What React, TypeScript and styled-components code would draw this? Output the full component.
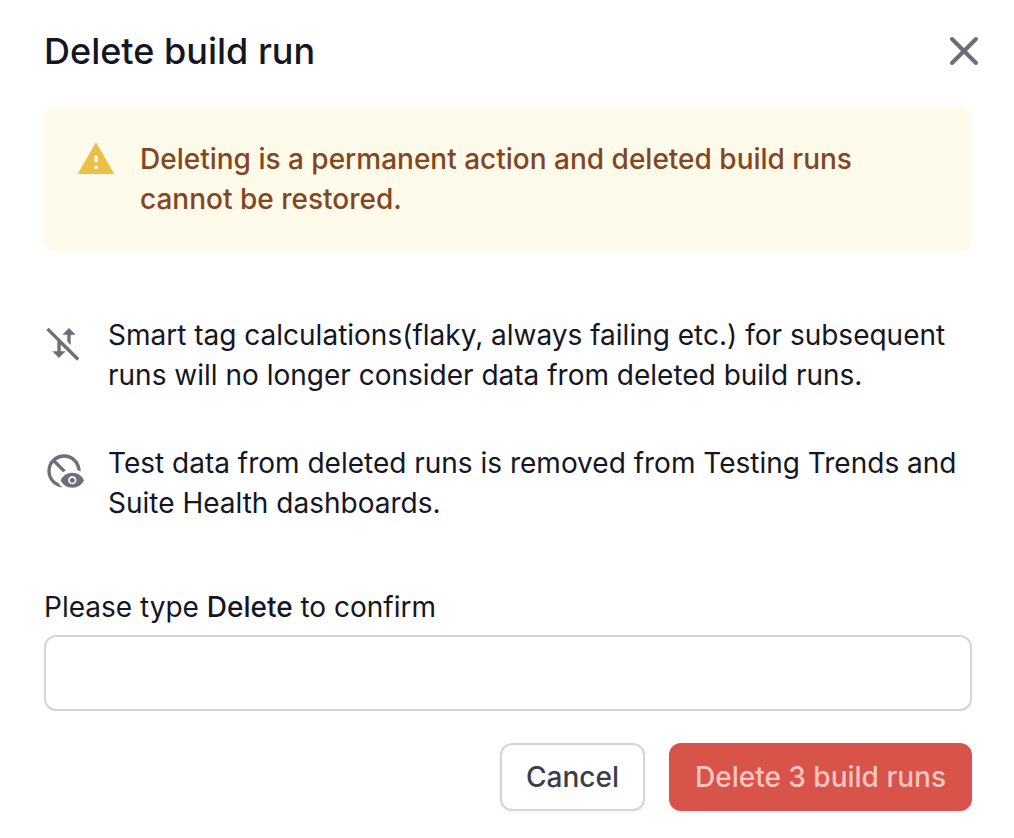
import React, { useState } from "react";
import styled, { createGlobalStyle } from "styled-components";
import { X } from "lucide-react";
import { MdDisabledVisible, MdMobiledataOff, MdWarning } from "react-icons/md";

const GlobalStyle = createGlobalStyle`
  *, *::before, *::after { box-sizing: border-box; }
  body {
    margin: 0;
    background: #ffffff;
    color: #141624;
    font-family: Inter, "Liberation Sans", sans-serif;
    font-size: 28px;
    line-height: 40px;
  }
`;

const Dialog = styled.section`
  padding: 27px 42px 27px 44px;
`;

const Header = styled.header`
  display: flex;
  align-items: center;
  justify-content: space-between;
  margin-bottom: 32px;
`;

const Title = styled.h2`
  margin: 0;
  font-size: 36px;
  line-height: 48px;
  font-weight: 500;
`;

const CloseButton = styled.button`
  display: flex;
  margin: 0 -16px 0 0;
  padding: 0;
  border: 0;
  background: none;
  color: #6c6f7a;
  cursor: pointer;
`;

const Alert = styled.div`
  display: flex;
  gap: 24px;
  padding: 32px;
  border-radius: 12px;
  background: #fefbeb;
  color: #854520;
  font-weight: 500;
`;

const IconSlot = styled.span<{ $color: string }>`
  display: flex;
  flex: none;
  color: ${(p) => p.$color};
`;

const Text = styled.p`
  margin: 0;
`;

const Effects = styled.ul`
  display: flex;
  flex-direction: column;
  gap: 48px;
  margin: 64px 0;
  padding: 0;
  list-style: none;
`;

const Effect = styled.li`
  display: flex;
  gap: 24px;

  ${IconSlot} {
    padding-top: 8px;
  }
`;

const Field = styled.div`
  display: flex;
  flex-direction: column;
  gap: 8px;
`;

const Label = styled.label`
  strong {
    font-weight: 500;
  }
`;

const Input = styled.input`
  width: 100%;
  height: 76px;
  padding: 0 24px;
  border: 2px solid #d4d5d7;
  border-radius: 12px;
  background: #ffffff;
  color: inherit;
  font: inherit;
`;

const Actions = styled.footer`
  display: flex;
  justify-content: flex-end;
  gap: 24px;
  margin-top: 32px;
`;

const Button = styled.button<{ $danger?: boolean }>`
  padding: 12px 24px;
  border: 2px solid ${(p) => (p.$danger ? "#d8534a" : "#d4d5d7")};
  border-radius: 12px;
  background: ${(p) => (p.$danger ? "#d8534a" : "#ffffff")};
  color: ${(p) => (p.$danger ? "#fcc5c0" : "#3a3d4a")};
  box-shadow: 0 2px 4px rgba(0, 0, 0, 0.05);
  font: inherit;
  font-weight: 500;
  cursor: pointer;
`;

export default function App() {
  const [value, setValue] = useState("");

  return (
    <Dialog role="dialog" aria-labelledby="dialog-title">
      <GlobalStyle />
      <Header>
        <Title id="dialog-title">Delete build run</Title>
        <CloseButton type="button" aria-label="Close">
          <X size={48} strokeWidth={2} />
        </CloseButton>
      </Header>

      <Alert role="alert">
        <IconSlot $color="#ecc048">
          <MdWarning size={40} />
        </IconSlot>
        <Text>Deleting is a permanent action and deleted build runs cannot be restored.</Text>
      </Alert>

      <Effects>
        <Effect>
          <IconSlot $color="#6c6f7a">
            <MdMobiledataOff size={40} />
          </IconSlot>
          <Text>
            Smart tag calculations(flaky, always failing etc.) for subsequent runs will no longer
            consider data from deleted build runs.
          </Text>
        </Effect>
        <Effect>
          <IconSlot $color="#6c6f7a">
            <MdDisabledVisible size={40} />
          </IconSlot>
          <Text>
            Test data from deleted runs is removed from Testing Trends and Suite Health dashboards.
          </Text>
        </Effect>
      </Effects>

      <Field>
        <Label htmlFor="confirm">
          Please type <strong>Delete</strong> to confirm
        </Label>
        <Input id="confirm" type="text" value={value} onChange={(e) => setValue(e.target.value)} />
      </Field>

      <Actions>
        <Button type="button">Cancel</Button>
        <Button type="button" $danger>
          Delete 3 build runs
        </Button>
      </Actions>
    </Dialog>
  );
}
